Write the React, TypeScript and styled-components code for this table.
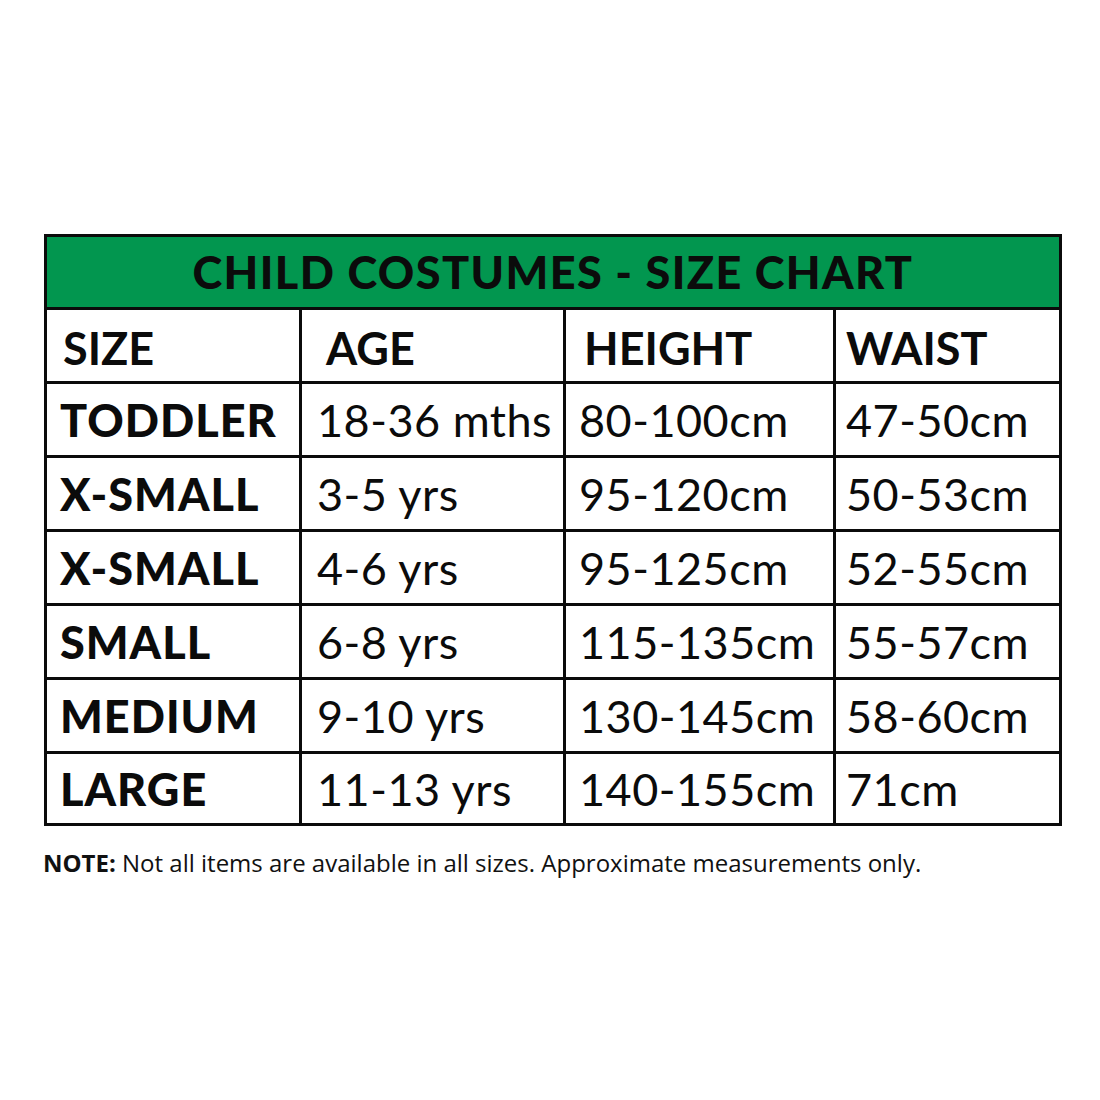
import React from 'react';
import styled, { createGlobalStyle } from 'styled-components';

const GlobalStyle = createGlobalStyle`
  html, body {
    margin: 0;
    padding: 0;
    background: #ffffff;
  }
`;

type Row = { size: string; age: string; height: string; waist: string };

const rows: Row[] = [
  { size: 'TODDLER', age: '18-36 mths', height: '80-100cm', waist: '47-50cm' },
  { size: 'X-SMALL', age: '3-5 yrs', height: '95-120cm', waist: '50-53cm' },
  { size: 'X-SMALL', age: '4-6 yrs', height: '95-125cm', waist: '52-55cm' },
  { size: 'SMALL', age: '6-8 yrs', height: '115-135cm', waist: '55-57cm' },
  { size: 'MEDIUM', age: '9-10 yrs', height: '130-145cm', waist: '58-60cm' },
  { size: 'LARGE', age: '11-13 yrs', height: '140-155cm', waist: '71cm' },
];

// left padding per column, header and body differ a bit
const headPad = [16, 24, 18, 10];
const bodyPad = [13, 15, 13, 10];

function App() {
  return (
    <Page>
      <GlobalStyle />
      <Chart>
        <Title>CHILD COSTUMES - SIZE CHART</Title>
        {['SIZE', 'AGE', 'HEIGHT', 'WAIST'].map((h, i) => (
          <HeadCell key={h} $pad={headPad[i]}>{h}</HeadCell>
        ))}
        {rows.map((r, idx) => (
          <React.Fragment key={idx}>
            <SizeCell $pad={bodyPad[0]}>{r.size}</SizeCell>
            <ValueCell $pad={bodyPad[1]}>{r.age}</ValueCell>
            <ValueCell $pad={bodyPad[2]}>{r.height}</ValueCell>
            <ValueCell $pad={bodyPad[3]}>{r.waist}</ValueCell>
          </React.Fragment>
        ))}
      </Chart>
      <Note>
        <b>NOTE:</b> Not all items are available in all sizes. Approximate measurements only.
      </Note>
    </Page>
  );
}

export default App;

const Page = styled.div`
  width: 1100px;
  height: 1100px;
  box-sizing: border-box;
  padding: 234px 0 0 44px;
  background: #fff;
`;

const Chart = styled.div`
  display: grid;
  grid-template-columns: 252px 261px 267px 223px;
  grid-template-rows: 70px repeat(6, 71px) 69px;
  gap: 3px;
  padding: 3px;
  width: 1018px;
  box-sizing: border-box;
  background: #0b0b0b;
  font-family: Lato, "Liberation Sans", sans-serif;
  color: #0b0b0b;
`;

const Title = styled.div`
  grid-column: 1 / -1;
  background: #02964f;
  display: flex;
  align-items: center;
  justify-content: center;
  font-size: 45px;
  font-weight: 900;
  letter-spacing: 1.4px;
`;

const Cell = styled.div<{ $pad: number }>`
  background: #fff;
  display: flex;
  align-items: center;
  padding-left: ${p => p.$pad}px;
  white-space: nowrap;
  overflow: visible;
  font-size: 45px;
`;

const HeadCell = styled(Cell)`
  font-weight: 700;
  padding-top: 4px;
`;

const SizeCell = styled(Cell)`
  font-weight: 900;
  letter-spacing: 1px;
`;

const ValueCell = styled(Cell)`
  font-weight: 400;
  letter-spacing: 0.5px;
`;

const Note = styled.p`
  margin: 25px 0 0 -1px;
  font-family: "Open Sans", "Liberation Sans", sans-serif;
  font-size: 24px;
  line-height: 24px;
  color: #111;

  b {
    font-weight: 700;
  }
`;
